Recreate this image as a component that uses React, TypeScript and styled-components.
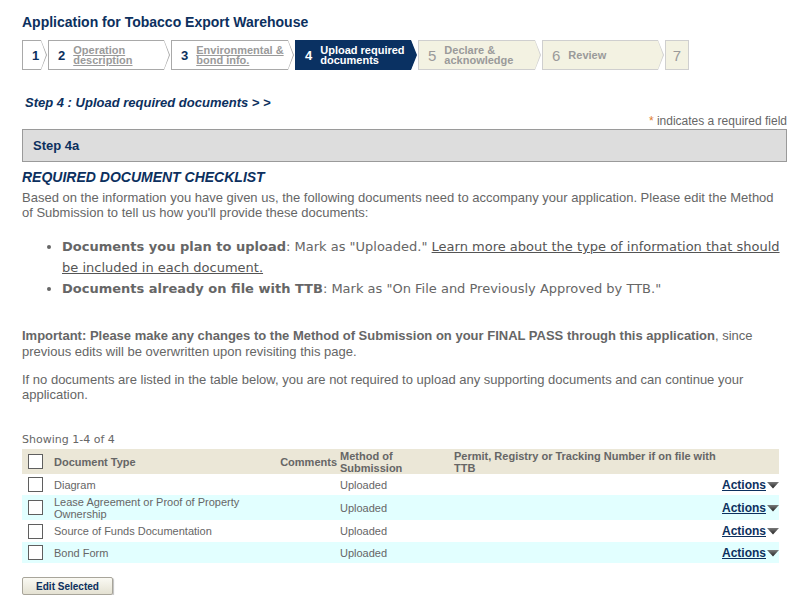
import React from 'react';
import styled, { createGlobalStyle, css } from 'styled-components';

const navy = '#0c305e';
const text = '#666666';

const GlobalStyle = createGlobalStyle`
  body {
    margin: 0;
    background: #ffffff;
    font-family: 'Liberation Sans', Arial, sans-serif;
    color: ${text};
  }
`;

const Page = styled.div`
  width: 765px;
  padding: 13px 0 0 22px;
`;

const Title = styled.h1`
  margin: 0;
  font-size: 14px;
  line-height: 18px;
  font-weight: bold;
  color: ${navy};
`;

const StepBar = styled.div`
  display: flex;
  gap: 1px;
  margin-top: 9px;
`;

type StepVariant = 'done' | 'current' | 'todo';

const stepColors = {
  done: { bg: '#ffffff', border: '#a9a9a9' },
  current: { bg: '#0a3162', border: '#0a3162' },
  todo: { bg: '#f3f2e2', border: '#cfcfcf' },
};

const Step = styled.div<{ $variant: StepVariant; $width: number; $last?: boolean }>`
  position: relative;
  box-sizing: border-box;
  display: flex;
  align-items: center;
  height: 30px;
  width: ${(p) => p.$width}px;
  padding-left: ${(p) => (p.$last ? 0 : 9)}px;
  justify-content: ${(p) => (p.$last ? 'center' : 'flex-start')};
  margin-right: ${(p) => (p.$last ? 0 : 6)}px;
  background: ${(p) => stepColors[p.$variant].bg};
  border: 1px solid ${(p) => stepColors[p.$variant].border};
  ${(p) =>
    !p.$last &&
    css`
      border-right: none;
      &::before {
        content: '';
        position: absolute;
        left: 100%;
        top: -1px;
        border-top: 15px solid transparent;
        border-bottom: 15px solid transparent;
        border-left: 6px solid ${stepColors[p.$variant].border};
      }
      &::after {
        content: '';
        position: absolute;
        left: 100%;
        top: 0;
        border-top: 14px solid transparent;
        border-bottom: 14px solid transparent;
        border-left: 5px solid ${stepColors[p.$variant].bg};
      }
    `}
`;

const StepNum = styled.span<{ $variant: StepVariant }>`
  flex: none;
  font-size: ${(p) => (p.$variant === 'todo' ? 15 : 13)}px;
  font-weight: ${(p) => (p.$variant === 'todo' ? 'normal' : 'bold')};
  color: ${(p) => (p.$variant === 'current' ? '#ffffff' : p.$variant === 'done' ? navy : '#9a9a9a')};
`;

const StepLabel = styled.span<{ $variant: StepVariant }>`
  margin-left: 8px;
  font-size: 11px;
  line-height: 10px;
  font-weight: bold;
  color: ${(p) => (p.$variant === 'current' ? '#ffffff' : '#9a9a9a')};
  text-decoration: ${(p) => (p.$variant === 'done' ? 'underline' : 'none')};
`;

const StepHeading = styled.h2`
  margin: 25px 0 0 3px;
  font-size: 13px;
  line-height: 16px;
  font-style: italic;
  font-weight: bold;
  color: ${navy};
`;

const Required = styled.div`
  margin-top: 3px;
  text-align: right;
  font-size: 12px;
  line-height: 14px;
  color: ${text};
  span {
    color: #e07b2c;
  }
`;

const SectionBox = styled.div`
  box-sizing: border-box;
  height: 33px;
  margin-top: 1px;
  padding-left: 10px;
  display: flex;
  align-items: center;
  background: #dddddd;
  border: 1px solid #9a9a9a;
  font-size: 13px;
  font-weight: bold;
  color: ${navy};
`;

const Checklist = styled.h3`
  margin: 7px 0 0;
  font-size: 14px;
  line-height: 16px;
  font-style: italic;
  font-weight: bold;
  color: ${navy};
`;

const Para = styled.p<{ $top: number; $lh?: number }>`
  margin: ${(p) => p.$top}px 0 0;
  font-size: 13px;
  line-height: ${(p) => p.$lh || 15}px;
  color: ${text};
`;

const BulletList = styled.ul`
  margin: 16px 0 0;
  padding-left: 40px;
  font-family: 'DejaVu Sans', Verdana, sans-serif;
  font-size: 13px;
  line-height: 21px;
  color: ${text};
  a {
    color: #555555;
    text-decoration: underline;
  }
`;

const Showing = styled.div`
  margin-top: 31px;
  font-family: 'DejaVu Sans', Verdana, sans-serif;
  font-size: 11px;
  line-height: 13px;
  color: ${text};
`;

const Table = styled.table`
  width: 757px;
  table-layout: fixed;
  border-collapse: collapse;
  margin-top: 3px;
  font-size: 11px;
  color: ${text};
`;

const HeadRow = styled.tr`
  background: #ebe7d7;
  height: 25px;
`;

const cellPad = css<{ $pl?: number; $pr?: number; $align?: string }>`
  padding: 0 ${(p) => p.$pr ?? 0}px 0 ${(p) => p.$pl ?? 0}px;
  text-align: ${(p) => p.$align || 'left'};
  vertical-align: middle;
`;

const Th = styled.th<{ $pl?: number; $pr?: number; $align?: string }>`
  ${cellPad};
  font-size: 11px;
  line-height: 12px;
  font-weight: bold;
  color: ${text};
`;

const Row = styled.tr<{ $alt: boolean; $h: number }>`
  background: ${(p) => (p.$alt ? '#e2ffff' : '#ffffff')};
  height: ${(p) => p.$h}px;
`;

const Td = styled.td<{ $pl?: number; $pr?: number; $align?: string }>`
  ${cellPad};
  line-height: 12px;
`;

const Box = styled.span`
  display: block;
  box-sizing: border-box;
  width: 15px;
  height: 15px;
  margin-left: 6px;
  border: 1px solid #5f5f5f;
  background: #ffffff;
`;

const ActionLink = styled.a`
  display: inline-flex;
  align-items: center;
  font-size: 12px;
  font-weight: bold;
  color: ${navy};
  text-decoration: underline;
  white-space: nowrap;
  svg {
    margin-left: 1px;
  }
`;

const EditButton = styled.button`
  display: block;
  margin-top: 14px;
  width: 91px;
  height: 18px;
  padding: 0;
  border: 1px solid #a8a59a;
  border-radius: 2px;
  background: linear-gradient(#faf9f3, #e4e1d2);
  box-shadow: 1px 1px 1px rgba(0, 0, 0, 0.25);
  font-family: 'Liberation Sans', Arial, sans-serif;
  font-size: 10px;
  font-weight: bold;
  color: ${navy};
`;

const Caret = () => (
  <svg width="12" height="8" viewBox="0 0 12 8">
    <defs>
      <linearGradient id="cg" x1="0" y1="0" x2="0" y2="1">
        <stop offset="0" stopColor="#7a7a7a" />
        <stop offset="1" stopColor="#222" />
      </linearGradient>
    </defs>
    <polygon points="0,1 12,1 6,7.5" fill="url(#cg)" />
  </svg>
);

const steps: { n: string; label?: React.ReactNode; v: StepVariant; w: number }[] = [
  { n: '1', v: 'done', w: 19 },
  { n: '2', label: <>Operation<br />description</>, v: 'done', w: 116 },
  { n: '3', label: <>Environmental &amp;<br />bond info.</>, v: 'done', w: 117 },
  { n: '4', label: <>Upload required<br />documents</>, v: 'current', w: 116 },
  { n: '5', label: <>Declare &amp;<br />acknowledge</>, v: 'todo', w: 117 },
  { n: '6', label: 'Review', v: 'todo', w: 116 },
];

const docs = [
  { name: 'Diagram', h: 21 },
  { name: 'Lease Agreement or Proof of Property Ownership', h: 25 },
  { name: 'Source of Funds Documentation', h: 22 },
  { name: 'Bond Form', h: 21 },
];

export default function App() {
  return (
    <Page>
      <GlobalStyle />
      <Title>Application for Tobacco Export Warehouse</Title>
      <StepBar>
        {steps.map((s) => (
          <Step key={s.n} $variant={s.v} $width={s.w}>
            <StepNum $variant={s.v}>{s.n}</StepNum>
            {s.label && <StepLabel $variant={s.v}>{s.label}</StepLabel>}
          </Step>
        ))}
        <Step $variant="todo" $width={24} $last>
          <StepNum $variant="todo">7</StepNum>
        </Step>
      </StepBar>

      <StepHeading>Step 4 : Upload required documents &gt; &gt;</StepHeading>
      <Required>
        <span>*</span> indicates a required field
      </Required>
      <SectionBox>Step 4a</SectionBox>

      <Checklist>REQUIRED DOCUMENT CHECKLIST</Checklist>
      <Para $top={5}>
        Based on the information you have given us, the following documents need to accompany your application. Please edit the Method
        of Submission to tell us how you'll provide these documents:
      </Para>

      <BulletList>
        <li>
          <b>Documents you plan to upload</b>: Mark as "Uploaded."{' '}
          <a>Learn more about the type of information that should be included in each document.</a>
        </li>
        <li>
          <b>Documents already on file with TTB</b>: Mark as "On File and Previously Approved by TTB."
        </li>
      </BulletList>

      <Para $top={29} $lh={16}>
        <b>Important: Please make any changes to the Method of Submission on your FINAL PASS through this application</b>, since
        previous edits will be overwritten upon revisiting this page.
      </Para>
      <Para $top={12}>
        If no documents are listed in the table below, you are not required to upload any supporting documents and can continue your
        application.
      </Para>

      <Showing>Showing 1-4 of 4</Showing>
      <Table>
        <colgroup>
          <col style={{ width: 26 }} />
          <col style={{ width: 232 }} />
          <col style={{ width: 58 }} />
          <col style={{ width: 114 }} />
          <col style={{ width: 268 }} />
          <col style={{ width: 59 }} />
        </colgroup>
        <thead>
          <HeadRow>
            <Th>
              <Box />
            </Th>
            <Th $pl={6}>Document Type</Th>
            <Th $align="right" $pr={1}>Comments</Th>
            <Th $pl={2}>
              Method of
              <br />
              Submission
            </Th>
            <Th $pl={2}>
              Permit, Registry or Tracking Number if on file with
              <br />
              TTB
            </Th>
            <Th />
          </HeadRow>
        </thead>
        <tbody>
          {docs.map((d, i) => (
            <Row key={d.name} $alt={i % 2 === 1} $h={d.h}>
              <Td>
                <Box />
              </Td>
              <Td $pl={6}>{d.name}</Td>
              <Td />
              <Td $pl={2}>Uploaded</Td>
              <Td />
              <Td $align="right">
                <ActionLink>
                  Actions <Caret />
                </ActionLink>
              </Td>
            </Row>
          ))}
        </tbody>
      </Table>
      <EditButton>Edit Selected</EditButton>
    </Page>
  );
}
